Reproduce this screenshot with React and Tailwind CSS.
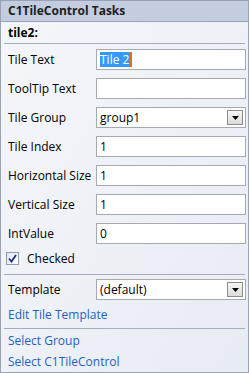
import React from 'react';

const font = { fontFamily: '"Segoe UI", "Open Sans", "Liberation Sans", sans-serif' };

function Field({ label, value, selected }) {
  return (
    <div className="flex items-center h-[21px]">
      <div className="w-[88px] shrink-0 text-[12px] text-black">{label}</div>
      <div className="flex-1 h-[21px] mr-[2px] border border-[#a6aab0] bg-white flex items-center pl-[3px] text-[12px] text-black">
        {selected ? (
          <span className="bg-[#3399ff] text-white leading-[15px] pr-[1px] border-r-2 border-[#e07010]">{value}</span>
        ) : (
          <span>{value}</span>
        )}
      </div>
    </div>
  );
}

function Combo({ label, value }) {
  return (
    <div className="flex items-center h-[21px]">
      <div className="w-[88px] shrink-0 text-[12px] text-black">{label}</div>
      <div className="flex-1 h-[21px] mr-[2px] border border-[#a6aab0] bg-white flex items-center pl-[3px] pr-[2px] text-[12px] text-black">
        <span className="flex-1">{value}</span>
        <div className="w-[16px] h-[15px] border border-[#8c8c8c] bg-gradient-to-b from-[#f6f6f6] to-[#dcdcdc] flex items-center justify-center">
          <svg width="7" height="4" viewBox="0 0 7 4">
            <path d="M0 0 H7 L3.5 4 Z" fill="#000" />
          </svg>
        </div>
      </div>
    </div>
  );
}

function Sep() {
  return <div className="mx-[3px] h-px bg-[#a3adbf] shrink-0" />;
}

export default function App() {
  return (
    <div style={font} className="w-[249px] h-[373px] border border-[#98a3b6] bg-gradient-to-br from-[#f4f6fa] to-[#e8ecf3] flex flex-col overflow-hidden">
      <div className="h-[21px] shrink-0 bg-[#c3cddf] border-b border-[#98a3b6] px-[7px] flex items-center text-[12px] font-bold text-[#1e1e1e]">
        C1TileControl Tasks
      </div>
      <div className="h-[21px] shrink-0 px-[7px] flex items-center text-[12px] font-bold text-black">tile2:</div>
      <Sep />
      <div className="pt-[5px] pl-[7px] flex flex-col gap-[8px]">
        <Field label="Tile Text" value="Tile 2" selected />
        <Field label="ToolTip Text" value="" />
        <Combo label="Tile Group" value="group1" />
        <Field label="Tile Index" value="1" />
        <Field label="Horizontal Size" value="1" />
        <Field label="Vertical Size" value="1" />
        <Field label="IntValue" value="0" />
      </div>
      <div className="mt-[8px] pl-[5px] h-[13px] flex items-center gap-[8px] shrink-0">
        <div className="w-[13px] h-[13px] border border-[#8e9bb5] bg-gradient-to-br from-[#dfe6f2] to-white flex items-center justify-center">
          <svg width="9" height="9" viewBox="0 0 9 9">
            <path d="M1 4.5 L3.5 7.5 L8 1" stroke="#1b2f7a" strokeWidth="1.8" fill="none" />
          </svg>
        </div>
        <span className="text-[12px] text-black">Checked</span>
      </div>
      <div className="mt-[9px]"><Sep /></div>
      <div className="pt-[4px] pl-[7px]">
        <Combo label="Template" value="(default)" />
      </div>
      <div className="h-[20px] mt-[5px] px-[7px] flex items-center text-[12px] text-[#1c62c4] shrink-0">Edit Tile Template</div>
      <div className="mt-[3px]"><Sep /></div>
      <div className="h-[20px] mt-[2px] px-[7px] flex items-center text-[12px] text-[#1c62c4] shrink-0">Select Group</div>
      <div className="h-[20px] mt-[1px] px-[7px] flex items-center text-[12px] text-[#1c62c4] shrink-0">Select C1TileControl</div>
    </div>
  );
}
